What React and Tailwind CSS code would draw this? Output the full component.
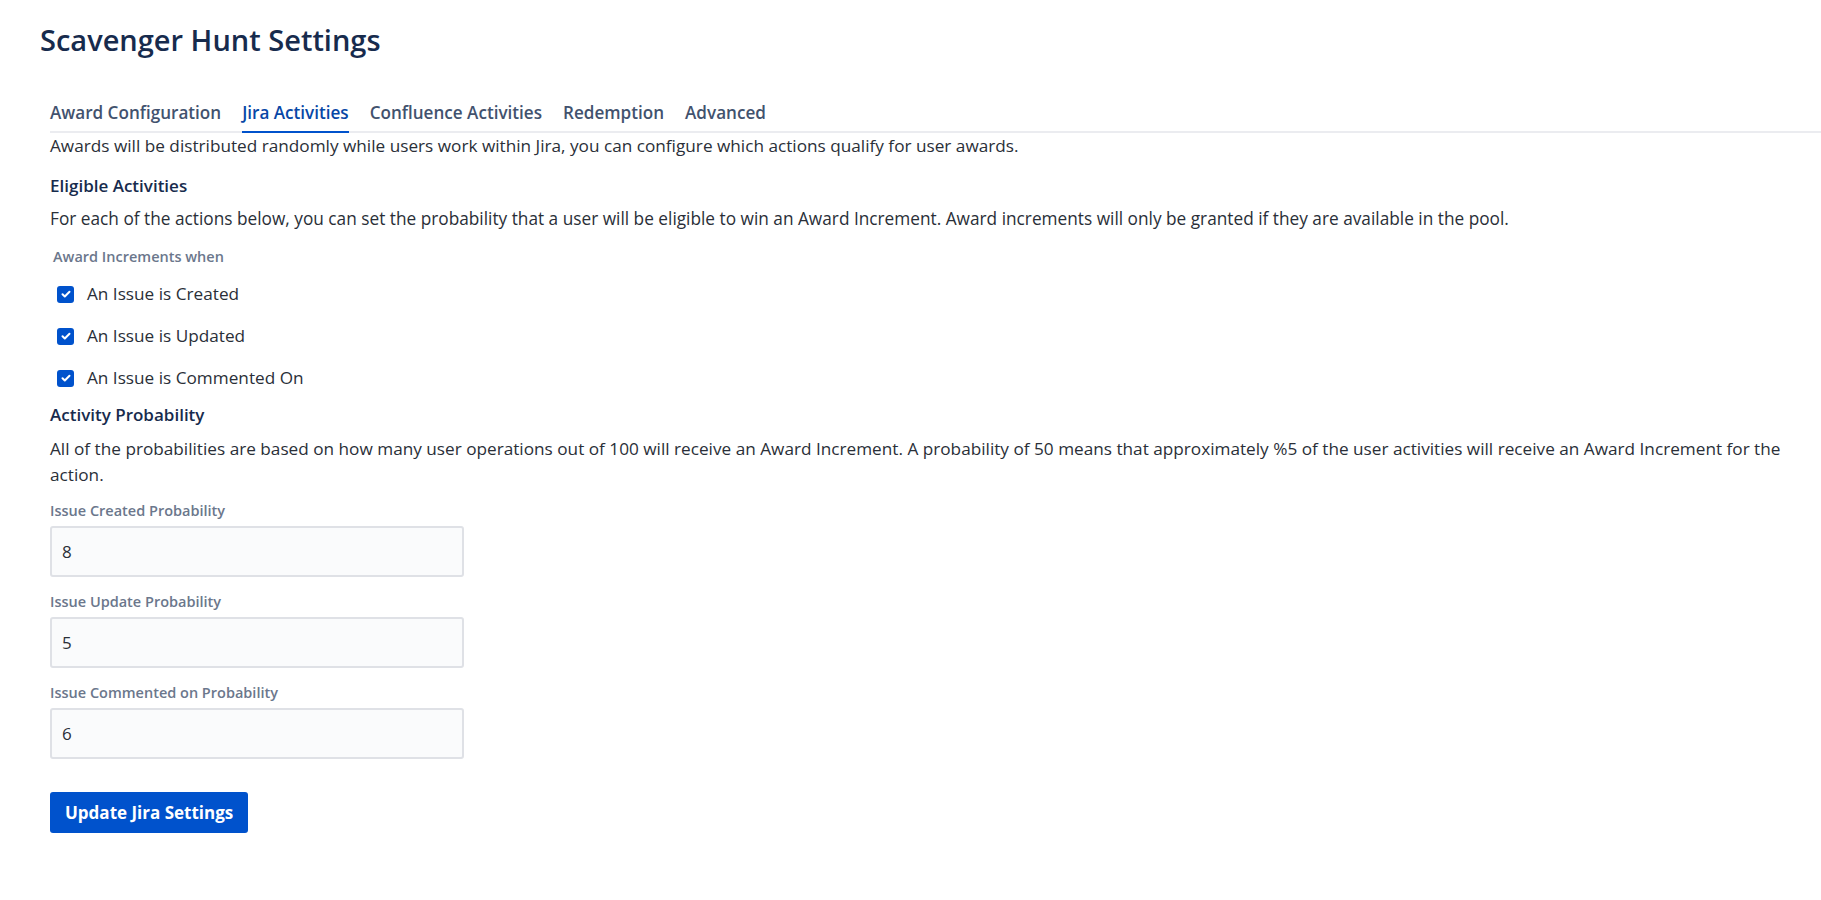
import { useState } from 'react';

const tabs = ['Award Configuration', 'Jira Activities', 'Confluence Activities', 'Redemption', 'Advanced'];

const activities = [
  { id: 'created', label: 'An Issue is Created' },
  { id: 'updated', label: 'An Issue is Updated' },
  { id: 'commented', label: 'An Issue is Commented On' },
];

const probabilities = [
  { id: 'createdProb', label: 'Issue Created Probability' },
  { id: 'updatedProb', label: 'Issue Update Probability' },
  { id: 'commentedProb', label: 'Issue Commented on Probability' },
];

const CheckRow = ({ label, checked, onToggle }) => (
  <label className="flex items-center h-[42px] cursor-pointer">
    <span className="ml-[7px] w-[17px] h-[17px] rounded-[3px] bg-[#0052cc] flex items-center justify-center" onClick={onToggle}>
      {checked && (
        <svg width="12" height="12" viewBox="0 0 12 12" fill="none">
          <path d="M2.5 6.2l2.3 2.3 4.7-4.8" stroke="white" strokeWidth="2" strokeLinecap="round" strokeLinejoin="round" />
        </svg>
      )}
    </span>
    <span className="ml-[13px] text-[17.2px] leading-[24px] text-[#2a2f38]">{label}</span>
  </label>
);

const ProbabilityField = ({ label, value, onChange, first }) => (
  <div className={first ? 'mt-[13px]' : 'mt-[15px]'}>
    <div className="text-[14.5px] leading-[20px] font-semibold text-[#6b778c]">{label}</div>
    <input
      value={value}
      onChange={onChange}
      className="mt-[5px] block w-[414px] h-[51px] px-[10px] rounded-[3px] border-2 border-[#dfe1e6] bg-[#fafbfc] text-[17px] text-[#2a2f38] outline-none"
    />
  </div>
);

export default function App() {
  const [checked, setChecked] = useState({ created: true, updated: true, commented: true });
  const [values, setValues] = useState({ createdProb: '8', updatedProb: '5', commentedProb: '6' });

  return (
    <div className="min-h-screen bg-white pl-[40px] pt-[20px] pb-[60px] font-['Open_Sans',sans-serif] text-[#2a2f38]">
      <h1 className="text-[29px] leading-[40px] font-semibold text-[#172b4d]">Scavenger Hunt Settings</h1>

      <div className="pl-[10px] mt-[41px]">
        <div className="flex gap-[21px] border-b-2 border-[#ebecf0]">
          {tabs.map((tab) => (
            <div
              key={tab}
              className={
                tab === 'Jira Activities'
                  ? 'pb-[6px] -mb-[2px] border-b-2 border-[#0052cc] text-[17.1px] leading-[24px] font-semibold text-[#0747a6]'
                  : 'pb-[6px] -mb-[2px] border-b-2 border-transparent text-[17.1px] leading-[24px] font-semibold text-[#42526e]'
              }
            >
              {tab}
            </div>
          ))}
        </div>

        <p className="mt-px text-[17.2px] leading-[24px]">
          Awards will be distributed randomly while users work within Jira, you can configure which actions qualify for user awards.
        </p>

        <h2 className="mt-[16px] text-[17px] leading-[24px] font-semibold text-[#172b4d]">Eligible Activities</h2>
        <p className="mt-[9px] text-[17.25px] leading-[24px]">
          For each of the actions below, you can set the probability that a user will be eligible to win an Award Increment. Award increments will only be granted if they are available in the pool.
        </p>

        <div className="mt-[16px] ml-[3px] text-[14.5px] leading-[20px] font-semibold text-[#6b778c]">Award Increments when</div>
        <div className="mt-[6px]">
          {activities.map((a) => (
            <CheckRow
              key={a.id}
              label={a.label}
              checked={checked[a.id]}
              onToggle={() => setChecked({ ...checked, [a.id]: !checked[a.id] })}
            />
          ))}
        </div>

        <h2 className="mt-[4px] text-[17px] leading-[24px] font-semibold text-[#172b4d]">Activity Probability</h2>
        <p className="mt-[9px] text-[17.2px] leading-[26px]">
          All of the probabilities are based on how many user operations out of 100 will receive an Award Increment. A probability of 50 means that approximately %5 of the user activities will receive an Award Increment for the action.
        </p>

        {probabilities.map((p, i) => (
          <ProbabilityField
            key={p.id}
            first={i === 0}
            label={p.label}
            value={values[p.id]}
            onChange={(e) => setValues({ ...values, [p.id]: e.target.value })}
          />
        ))}

        <button className="mt-[33px] h-[41px] px-[15px] rounded-[3px] bg-[#0052cc] text-white text-[17px] font-bold">
          Update Jira Settings
        </button>
      </div>
    </div>
  );
}
